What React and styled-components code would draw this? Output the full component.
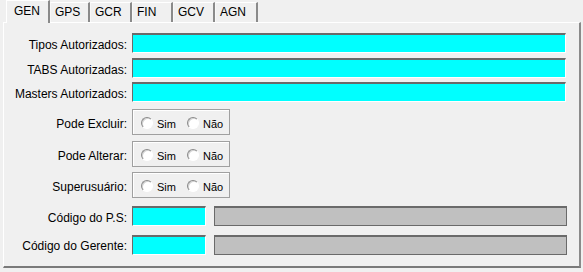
import React from "react";
import styled, { createGlobalStyle } from "styled-components";

const Global = createGlobalStyle`
  html, body { margin: 0; padding: 0; background: #f0f0f0; }
  body { font-family: "Liberation Sans", Arial, sans-serif; }
`;

const Window = styled.div`
  width: 583px;
  height: 272px;
  background: #f0f0f0;
  box-sizing: border-box;
  padding: 1px 2px 0 3px;
  display: flex;
  flex-direction: column;
  font-family: "Liberation Sans", Arial, sans-serif;
  color: #000;
`;

const TabBar = styled.div`
  display: flex;
  align-items: flex-end;
  height: 22px;
  padding-left: 3px;
  position: relative;
  z-index: 1;
  margin-bottom: -1px;
`;

const Tab = styled.div`
  box-sizing: border-box;
  width: ${(p) => p.$w}px;
  height: ${(p) => (p.$active ? 23 : 20)}px;
  margin-bottom: ${(p) => (p.$active ? 0 : 1)}px;
  background: #f0f0f0;
  border-top: 1px solid #ffffff;
  border-left: 1px solid ${(p) => (p.$active ? "#ffffff" : "#f8f8f8")};
  border-right: 2px solid #8a8a8a;
  font-size: 12px;
  line-height: ${(p) => (p.$active ? 20 : 18)}px;
  padding-left: ${(p) => (p.$active ? 7 : 4)}px;
`;

const Panel = styled.div`
  box-sizing: border-box;
  width: 578px;
  height: 246px;
  background: #f0f0f0;
  border-top: 1px solid #ffffff;
  border-left: 1px solid #ffffff;
  border-right: 2px solid #8a8a8a;
  border-bottom: 2px solid #7a7a7a;
  padding: 10px 0 0 0;
  display: flex;
  flex-direction: column;
`;

const Row = styled.div`
  display: grid;
  grid-template-columns: 123px auto;
  column-gap: 5px;
  align-items: center;
  height: ${(p) => p.$h}px;
  margin-top: ${(p) => p.$mt || 0}px;
`;

const Label = styled.div`
  text-align: right;
  font-size: 12px;
  white-space: nowrap;
  padding-top: 3px;
`;

const Field = styled.div`
  box-sizing: border-box;
  height: 20px;
  width: ${(p) => p.$w}px;
  background: ${(p) => (p.$gray ? "#c0c0c0" : "#00ffff")};
  border-top: 2px solid #6a6a6a;
  border-left: 1px solid #6a6a6a;
  border-right: 1px solid ${(p) => (p.$gray ? "#6a6a6a" : "#ffffff")};
  border-bottom: 1px solid ${(p) => (p.$gray ? "#6a6a6a" : "#ffffff")};
`;

const FieldPair = styled.div`
  display: flex;
  gap: 8px;
`;

const RadioBox = styled.div`
  box-sizing: border-box;
  width: 98px;
  height: 26px;
  border: 1px solid #a0a0a0;
  box-shadow: inset 1px 1px 0 #ffffff;
  display: flex;
  align-items: center;
  padding: 3px 0 0 8px;
  gap: 11px;
`;

const RadioOpt = styled.label`
  display: flex;
  align-items: center;
  gap: 4px;
  font-size: 11px;
`;

const Circle = styled.span`
  box-sizing: border-box;
  display: inline-block;
  width: 12px;
  height: 12px;
  border-radius: 50%;
  background: #ffffff;
  border: 1px solid;
  border-color: #8a8a8a #ffffff #ffffff #8a8a8a;
  box-shadow: inset 1px 1px 0 #d4d4d4;
  margin-top: -2px;
`;

const Radio = ({ children }) => (
  <RadioOpt>
    <Circle />
    <span>{children}</span>
  </RadioOpt>
);

const tabs = [
  ["GEN", 44],
  ["GPS", 40],
  ["GCR", 42],
  ["FIN", 41],
  ["GCV", 42],
  ["AGN", 43],
];

export default function App() {
  return (
    <>
      <Global />
      <Window>
        <TabBar>
          {tabs.map(([t, w], i) => (
            <Tab key={t} $w={w} $active={i === 0}>
              {t}
            </Tab>
          ))}
        </TabBar>
        <Panel>
          <Row $h={20}>
            <Label>Tipos Autorizados:</Label>
            <Field $w={434} />
          </Row>
          <Row $h={20} $mt={5}>
            <Label>TABS Autorizadas:</Label>
            <Field $w={434} />
          </Row>
          <Row $h={20} $mt={4}>
            <Label>Masters Autorizados:</Label>
            <Field $w={434} />
          </Row>
          <Row $h={26} $mt={7}>
            <Label>Pode Excluir:</Label>
            <RadioBox>
              <Radio>Sim</Radio>
              <Radio>Não</Radio>
            </RadioBox>
          </Row>
          <Row $h={26} $mt={6}>
            <Label>Pode Alterar:</Label>
            <RadioBox>
              <Radio>Sim</Radio>
              <Radio>Não</Radio>
            </RadioBox>
          </Row>
          <Row $h={26} $mt={5}>
            <Label>Superusuário:</Label>
            <RadioBox>
              <Radio>Sim</Radio>
              <Radio>Não</Radio>
            </RadioBox>
          </Row>
          <Row $h={20} $mt={8}>
            <Label>Código do P.S:</Label>
            <FieldPair>
              <Field $w={74} />
              <Field $w={353} $gray />
            </FieldPair>
          </Row>
          <Row $h={21} $mt={8}>
            <Label>Código do Gerente:</Label>
            <FieldPair>
              <Field $w={74} />
              <Field $w={353} $gray />
            </FieldPair>
          </Row>
        </Panel>
      </Window>
    </>
  );
}
